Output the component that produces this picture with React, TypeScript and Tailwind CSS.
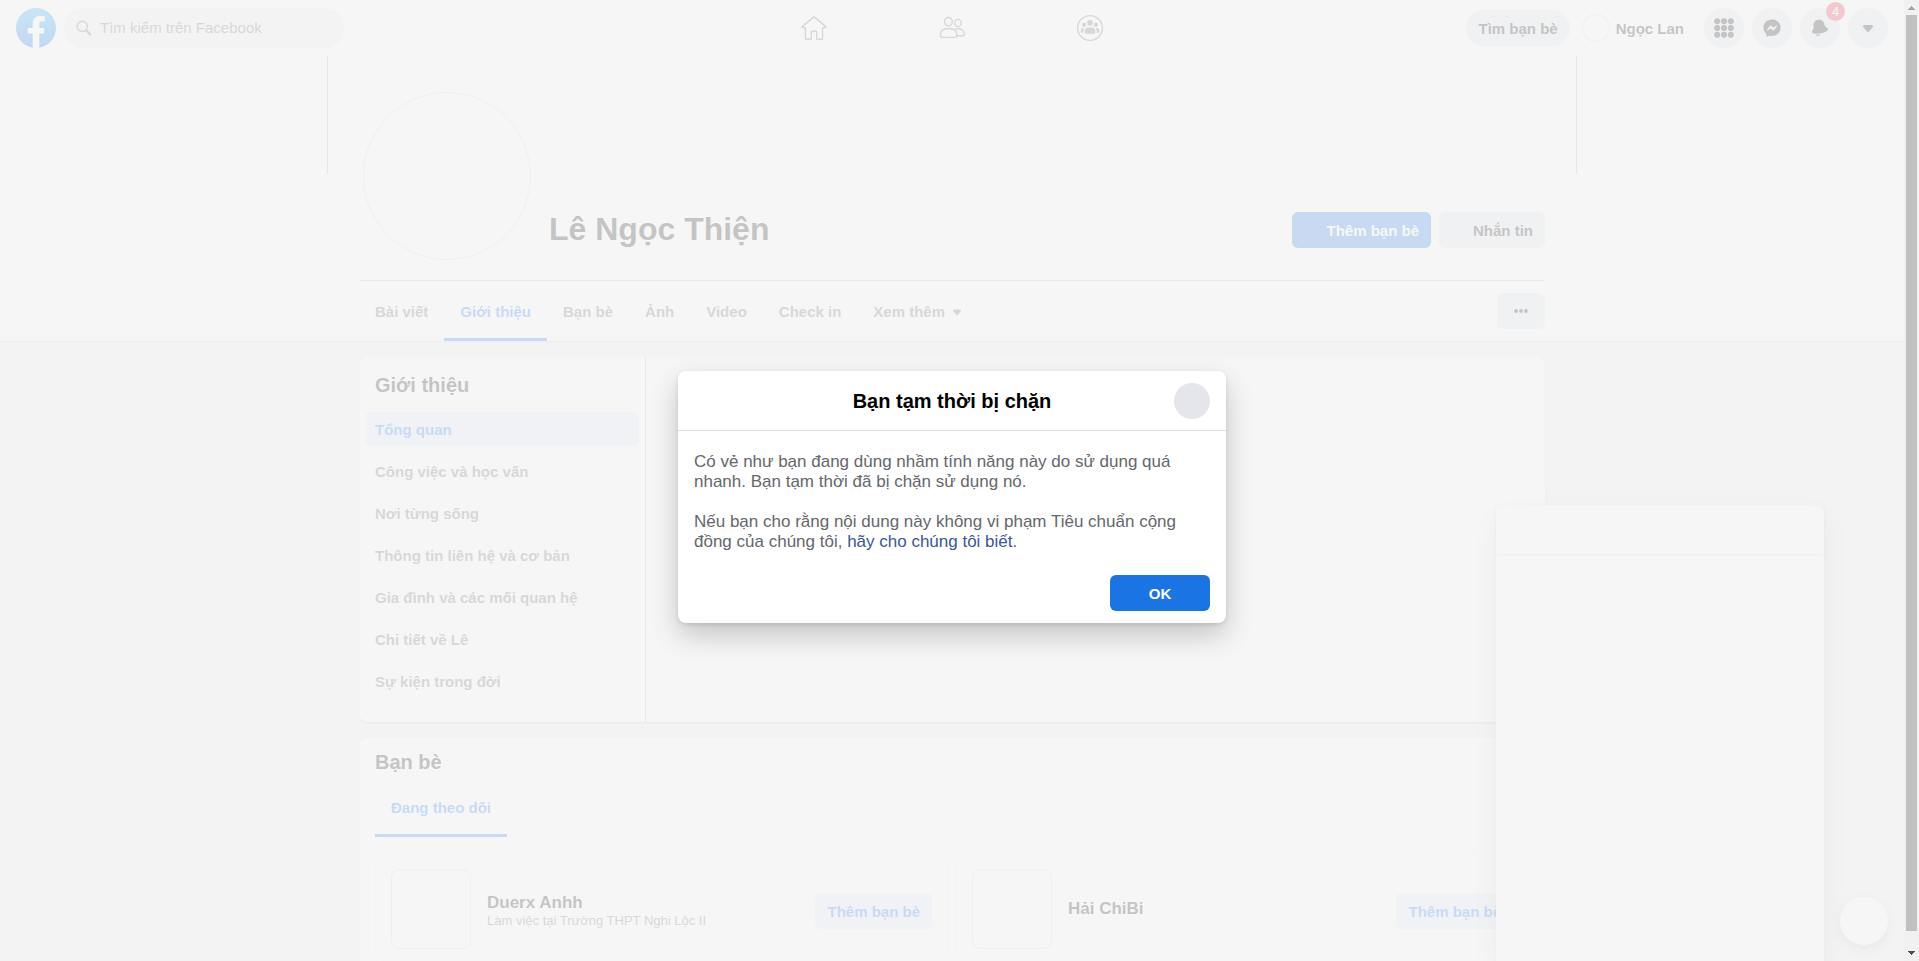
import type { ReactNode } from "react";

const sections = [
  "Tổng quan",
  "Công việc và học vấn",
  "Nơi từng sống",
  "Thông tin liên hệ và cơ bản",
  "Gia đình và các mối quan hệ",
  "Chi tiết về Lê",
  "Sự kiện trong đời",
];

const tabs = ["Bài viết", "Giới thiệu", "Bạn bè", "Ảnh", "Video", "Check in"];

const friends = [
  { name: "Duerx Anhh", note: "Làm việc tại Trường THPT Nghi Lộc II" },
  { name: "Hải ChiBi", note: "" },
];

function Logo() {
  return (
    <svg viewBox="0 0 36 36" className="size-10" aria-hidden="true">
      <defs>
        <linearGradient id="logo" x1="0" y1="0" x2="0" y2="1">
          <stop offset="0" stopColor="#19afff" />
          <stop offset="1" stopColor="#0062e0" />
        </linearGradient>
      </defs>
      <path
        fill="url(#logo)"
        d="M15 35.8C6.5 34.3 0 26.9 0 18 0 8.1 8.1 0 18 0s18 8.1 18 18c0 8.9-6.5 16.3-15 17.8l-1-.8h-4l-1 .8z"
      />
      <path
        fill="#fff"
        d="M25 23l.8-5H21v-3.5c0-1.4.5-2.5 2.7-2.5H26V7.4c-1.3-.2-2.7-.4-4-.4-4.1 0-7 2.5-7 7v4h-4.5v5H15v12.7c1 .2 2 .3 3 .3s2-.1 3-.3V23h4z"
      />
    </svg>
  );
}

function SearchIcon() {
  return (
    <svg viewBox="0 0 16 16" className="size-4" fill="none" stroke="#65676b" strokeLinecap="round" aria-hidden="true">
      <circle cx="6.3" cy="6.3" r="5.1" strokeWidth="1.4" />
      <path d="M10.4 10.4 14.3 14.4" strokeWidth="2.2" />
    </svg>
  );
}

function HomeIcon() {
  return (
    <svg viewBox="0 0 28 28" className="size-7" fill="none" stroke="#65676b" strokeWidth="1.4" strokeLinejoin="round" aria-hidden="true">
      <path d="M13.5 3.1a.8.8 0 0 1 1 0l11.2 9.5c.5.5.2 1-.4 1h-2.7v10.8a.9.9 0 0 1-.9.9h-4.4a.6.6 0 0 1-.6-.6v-6.8a.6.6 0 0 0-.6-.6h-4.2a.6.6 0 0 0-.6.6v6.8a.6.6 0 0 1-.6.6H6.300a.9.9 0 0 1-.9-.9V13.600H2.700c-.6 0-.9-.5-.4-1z" />
    </svg>
  );
}

function FriendsIcon() {
  return (
    <svg viewBox="0 0 28 28" className="size-7" fill="none" stroke="#65676b" strokeWidth="1.4" strokeLinejoin="round" aria-hidden="true">
      <ellipse cx="10.400" cy="7.700" rx="3.900" ry="4.200" />
      <ellipse cx="20" cy="9" rx="3.200" ry="3.600" />
      <path d="M8.200 14.800h4.600a6 6 0 0 1 6 6v1.200a1.400 1.400 0 0 1-1.400 1.400H3.900a1.400 1.400 0 0 1-1.400-1.400v-1.200a5.800 5.800 0 0 1 5.700-6z" />
      <path d="M16.800 15.200c.7-.3 1.500-.4 2.300-.4h1.700a5.700 5.700 0 0 1 5.700 5.700c0 .8-.5 1.200-1.300 1.200h-6.400" />
    </svg>
  );
}

function GroupsIcon() {
  return (
    <svg viewBox="0 0 28 28" className="size-7" fill="#65676b" aria-hidden="true">
      <circle cx="14" cy="14" r="12.400" fill="none" stroke="#65676b" strokeWidth="1.400" />
      <ellipse cx="14" cy="8.700" rx="2.800" ry="3" />
      <ellipse cx="8.100" cy="10.700" rx="2" ry="2.200" />
      <ellipse cx="19.900" cy="10.700" rx="2" ry="2.200" />
      <path d="M12.400 13.500h3.200a3.700 3.700 0 0 1 3.700 3.700v1.600a1 1 0 0 1-1 1H9.700a1 1 0 0 1-1-1v-1.600a3.700 3.700 0 0 1 3.700-3.700z" />
      <path d="M8.300 14c-.8 1.300-1.100 2.300-1.100 4.800H5.600a.8.8 0 0 1-.8-.8v-1.300c0-1.600 1-2.700 2.300-2.700zM19.700 14c.8 1.300 1.100 2.300 1.100 4.800h1.600a.8.8 0 0 0 .8-.8v-1.300c0-1.600-1-2.700-2.300-2.700z" />
    </svg>
  );
}

function Caret({ className }: { className: string }) {
  return (
    <svg viewBox="0 0 20 20" className={className} fill="currentColor" aria-hidden="true">
      <path d="M10 14a1 1 0 0 1-.755-.349L5.329 9.182a1.367 1.367 0 0 1-.205-1.460A1.184 1.184 0 0 1 6.200 7h7.600a1.180 1.180 0 0 1 1.074.721 1.357 1.357 0 0 1-.2 1.457l-3.918 4.473A1 1 0 0 1 10 14z" />
    </svg>
  );
}

function GridIcon() {
  return (
    <svg viewBox="0 0 20 20" className="size-5" fill="currentColor" aria-hidden="true">
      {[3.2, 10, 16.8].map((y) => [3.2, 10, 16.8].map((x) => <circle key={`${x}-${y}`} cx={x} cy={y} r="3" />))}
    </svg>
  );
}

function MessengerIcon() {
  return (
    <svg viewBox="0 0 28 28" className="size-5" fill="currentColor" aria-hidden="true">
      <path d="M14 2.042c6.760 0 12 4.952 12 11.640S20.760 25.322 14 25.322a13.091 13.091 0 0 1-3.474-.461.956.956 0 0 0-.641.047L7.500 25.959a.961.961 0 0 1-1.348-.849l-.065-2.134a.957.957 0 0 0-.322-.684A11.389 11.389 0 0 1 2 13.682C2 6.994 7.240 2.042 14 2.042ZM6.794 17.086a.57.57 0 0 0 .827.758l3.786-2.874a.722.722 0 0 1 .868 0l2.800 2.100a1.800 1.800 0 0 0 2.600-.481l3.525-5.592a.57.57 0 0 0-.827-.758l-3.786 2.874a.722.722 0 0 1-.868 0l-2.800-2.100a1.800 1.800 0 0 0-2.600.481Z" />
    </svg>
  );
}

function BellIcon() {
  return (
    <svg viewBox="0 0 28 28" className="size-5" fill="currentColor" aria-hidden="true">
      <path d="M7.847 23.488C9.207 23.488 11.443 23.363 14.467 22.806 13.944 24.228 12.581 25.247 10.980 25.247 9.649 25.247 8.483 24.542 7.825 23.488L7.847 23.488ZM24.923 15.730C25.170 17.002 24.278 18.127 22.270 19.076 21.170 19.595 18.724 20.583 14.684 21.369 11.568 21.974 9.285 22.113 7.848 22.113 7.421 22.113 7.068 22.101 6.790 22.085 4.574 21.958 3.324 21.248 3.077 19.976 2.702 18.049 3.295 17.305 4.278 16.073L4.537 15.748C5.200 14.907 5.459 14.081 5.035 11.902 4.086 7.022 6.284 3.687 11.064 2.753 15.846 1.830 19.134 4.096 20.083 8.977 20.506 11.156 21.056 11.824 21.986 12.355L22.348 12.561C23.720 13.335 24.548 13.802 24.923 15.730Z" />
    </svg>
  );
}

function RoundButton({ label, children }: { label: string; children: ReactNode }) {
  return (
    <button type="button" aria-label={label} className="relative flex size-10 items-center justify-center rounded-full bg-[#e0e3ea]">
      {children}
    </button>
  );
}

function TopBar() {
  return (
    <header className="flex h-14 shrink-0 items-center bg-white px-4">
      <div className="flex flex-1 items-center gap-2">
        <a href="#home" aria-label="Facebook">
          <Logo />
        </a>
        <label className="flex h-10 w-[280px] items-center gap-2 rounded-full bg-[#eeeff0] px-3">
          <SearchIcon />
          <input
            type="search"
            aria-label="Tìm kiếm trên Facebook"
            placeholder="Tìm kiếm trên Facebook"
            className="min-w-0 flex-1 bg-transparent text-[15px] outline-none placeholder:text-[#65676b]"
          />
        </label>
      </div>
      <nav className="flex">
        <a href="#home" aria-label="Trang chủ" className="flex w-[138px] justify-center">
          <HomeIcon />
        </a>
        <a href="#friends" aria-label="Bạn bè" className="flex w-[138px] justify-center">
          <FriendsIcon />
        </a>
        <a href="#groups" aria-label="Nhóm" className="flex w-[138px] justify-center">
          <GroupsIcon />
        </a>
      </nav>
      <div className="flex flex-1 items-center justify-end gap-2">
        <button type="button" className="h-9 rounded-full bg-[#e0e3ea] px-3 pt-0.5 text-[15px] font-bold">
          Tìm bạn bè
        </button>
        <a href="#me" className="mr-2 flex items-center gap-1.5 px-1 text-[15px] font-bold">
          <span className="size-7 rounded-full border border-black/15" />
          <span className="pt-0.5">Ngọc Lan</span>
        </a>
        <RoundButton label="Menu">
          <GridIcon />
        </RoundButton>
        <RoundButton label="Messenger">
          <MessengerIcon />
        </RoundButton>
        <RoundButton label="Thông báo">
          <BellIcon />
          <span className="absolute -top-1.5 -right-[5px] flex size-[19px] items-center justify-center rounded-full bg-[#e41e3f] text-[13px] text-white">
            4
          </span>
        </RoundButton>
        <RoundButton label="Tài khoản">
          <Caret className="size-5" />
        </RoundButton>
      </div>
    </header>
  );
}

function ProfileHeader() {
  return (
    <section className="shrink-0 bg-white shadow-[0_1px_2px_rgba(0,0,0,0.1)]">
      <div className="mx-auto max-w-[1250px]">
        <div className="h-[118px] border-x border-[#b4b4b4]" />
        <div className="px-8">
          <div className="-mt-[82px] flex items-end border-b border-[#bec0c4] px-1 pb-5">
            <div className="size-[168px] rounded-full border border-black/15" />
            <h1 className="mb-3 ml-[18px] flex-1 text-[32px] leading-[38px] font-bold">Lê Ngọc Thiện</h1>
            <div className="-mr-1 mb-3 flex gap-2">
              <button type="button" className="h-9 rounded-md bg-[#1b74e4] pt-0.5 pr-3 pl-[34px] text-[15px] font-bold text-white">
                Thêm bạn bè
              </button>
              <button type="button" className="h-9 rounded-md bg-[#e0e3ea] pt-0.5 pr-3 pl-[34px] text-[15px] font-bold">
                Nhắn tin
              </button>
            </div>
          </div>
          <div className="flex h-[60px] items-center justify-between">
            <nav className="flex h-full text-[15px] font-bold text-[#65676b]">
              {tabs.map((tab) =>
                tab === "Giới thiệu" ? (
                  <a key={tab} href="#about" className="flex items-center border-b-3 border-[#1876f2] px-4 pt-[5px] text-[#1876f2]">
                    {tab}
                  </a>
                ) : (
                  <a key={tab} href="#tab" className="flex items-center px-4 pt-0.5">
                    {tab}
                  </a>
                ),
              )}
              <button type="button" className="flex items-center gap-1 px-4 pt-0.5">
                Xem thêm
                <Caret className="size-4" />
              </button>
            </nav>
            <button type="button" aria-label="Thêm tùy chọn" className="flex h-9 w-12 items-center justify-center rounded-md bg-[#e0e3ea]">
              <svg viewBox="0 0 16 16" className="size-4" fill="currentColor" aria-hidden="true">
                <circle cx="3" cy="8" r="1.900" />
                <circle cx="8" cy="8" r="1.900" />
                <circle cx="13" cy="8" r="1.900" />
              </svg>
            </button>
          </div>
        </div>
      </div>
    </section>
  );
}

function AboutCard() {
  return (
    <section className="flex rounded-lg bg-white shadow-[0_1px_2px_rgba(0,0,0,0.2)]">
      <div className="w-[287px] border-r border-[#bec0c4] pb-5">
        <h2 className="px-4 pt-4 pb-[11px] text-xl leading-6 font-bold">Giới thiệu</h2>
        <nav className="flex flex-col px-1.5 text-[15px] font-bold text-[#65676b]">
          {sections.map((s, i) => (
            <a
              key={s}
              href="#section"
              className={
                i === 0
                  ? "my-1 flex h-[34px] items-center rounded-md bg-[#e2eafa] px-2.5 pt-0.5 text-[#1876f2]"
                  : "my-1 flex h-[34px] items-center rounded-md px-2.5 pt-0.5"
              }
            >
              {s}
            </a>
          ))}
        </nav>
      </div>
    </section>
  );
}

function FriendsCard() {
  return (
    <section className="rounded-lg bg-white px-4 pb-4 shadow-[0_1px_2px_rgba(0,0,0,0.2)]">
      <h2 className="pt-3 pb-[3px] text-xl leading-6 font-bold">Bạn bè</h2>
      <div className="flex h-[60px] text-[15px] font-bold text-[#1876f2]">
        <a href="#following" className="flex items-center border-b-3 border-[#1876f2] px-4 pt-[5px]">
          Đang theo dõi
        </a>
      </div>
      <ul className="mt-4 grid grid-cols-2 gap-2">
        {friends.map((f) => (
          <li key={f.name} className="flex items-center rounded-lg border border-black/5 p-[15px]">
            <div className="size-20 rounded-lg border border-black/15" />
            <div className={f.note ? "ml-4 flex-1 pt-1" : "ml-4 flex-1"}>
              <a href="#friend" className="block text-[17px] leading-5 font-bold">
                {f.name}
              </a>
              {f.note && <p className="text-[13px] leading-4 text-[#65676b]">{f.note}</p>}
            </div>
            <button type="button" className="mt-1 h-9 rounded-md bg-[#e2eafa] px-3 pt-0.5 text-[15px] font-bold text-[#1876f2]">
              Thêm bạn bè
            </button>
          </li>
        ))}
      </ul>
    </section>
  );
}

function BlockedDialog() {
  return (
    <div
      role="dialog"
      aria-modal="true"
      aria-labelledby="dialog-title"
      className="w-[548px] rounded-lg bg-white shadow-[0_12px_28px_rgba(0,0,0,0.2),0_2px_4px_rgba(0,0,0,0.1)]"
    >
      <div className="relative flex h-[60px] items-center justify-center border-b border-[#dfe0e2]">
        <h2 id="dialog-title" className="text-xl font-bold text-black">
          Bạn tạm thời bị chặn
        </h2>
        <button type="button" aria-label="Đóng" className="absolute top-3 right-4 size-9 rounded-full bg-[#e4e6eb]" />
      </div>
      <div className="flex flex-col gap-5 px-4 pt-[21px] pb-[23px] text-[17px] leading-5 text-[#65676b]">
        <p>Có vẻ như bạn đang dùng nhầm tính năng này do sử dụng quá nhanh. Bạn tạm thời đã bị chặn sử dụng nó.</p>
        <p>
          Nếu bạn cho rằng nội dung này không vi phạm Tiêu chuẩn cộng đồng của chúng tôi,{" "}
          <a href="#feedback" className="text-[#385898]">
            hãy cho chúng tôi biết
          </a>
          .
        </p>
      </div>
      <div className="flex justify-end px-4 pb-3">
        <button type="button" className="h-9 w-[100px] rounded-md bg-[#1b74e4] pt-0.5 text-[15px] font-bold text-white">
          OK
        </button>
      </div>
    </div>
  );
}

function ScrollTrack() {
  return (
    <div aria-hidden="true" className="flex w-[15px] shrink-0 flex-col items-center bg-[#f1f1f1]">
      <svg viewBox="0 0 15 15" className="size-[15px]" fill="#a3a3a3" shapeRendering="crispEdges">
        <path d="M7 6h1v1h1v1h1v1h1v1H4V9h1V8h1V7h1z" />
      </svg>
      <div className="mb-[15px] w-[11px] flex-1 bg-[#c1c1c1]" />
      <svg viewBox="0 0 15 15" className="size-[15px]" fill="#505050" shapeRendering="crispEdges">
        <path d="M4 5h7v1h-1v1H9v1H8v1H7V8H6V7H5V6H4z" />
      </svg>
    </div>
  );
}

export default function App() {
  return (
    <div className="flex h-screen overflow-hidden font-['Liberation_Sans',Arial,sans-serif] text-[#050505]">
      <div className="relative isolate flex min-w-0 flex-1 flex-col overflow-hidden bg-[#eeeff1]">
        <TopBar />
        <ProfileHeader />
        <main className="mx-auto flex w-full max-w-[1250px] flex-col gap-4 px-8 py-4">
          <AboutCard />
          <FriendsCard />
        </main>

        <aside className="absolute right-20 bottom-0 h-[455px] w-[328px] rounded-t-lg bg-white shadow-[0_12px_28px_rgba(0,0,0,0.2),0_2px_4px_rgba(0,0,0,0.1)]">
          <div className="h-12 shadow-[0_1px_2px_rgba(0,0,0,0.2)]" />
        </aside>
        <button
          type="button"
          aria-label="Tin nhắn mới"
          className="absolute right-4 bottom-4 size-12 rounded-full bg-white shadow-[0_4px_12px_rgba(0,0,0,0.2)]"
        />

        <div className="absolute inset-0 flex items-center justify-center bg-[#f4f4f4]/80 pt-[33px]">
          <BlockedDialog />
        </div>
      </div>
      <ScrollTrack />
    </div>
  );
}
